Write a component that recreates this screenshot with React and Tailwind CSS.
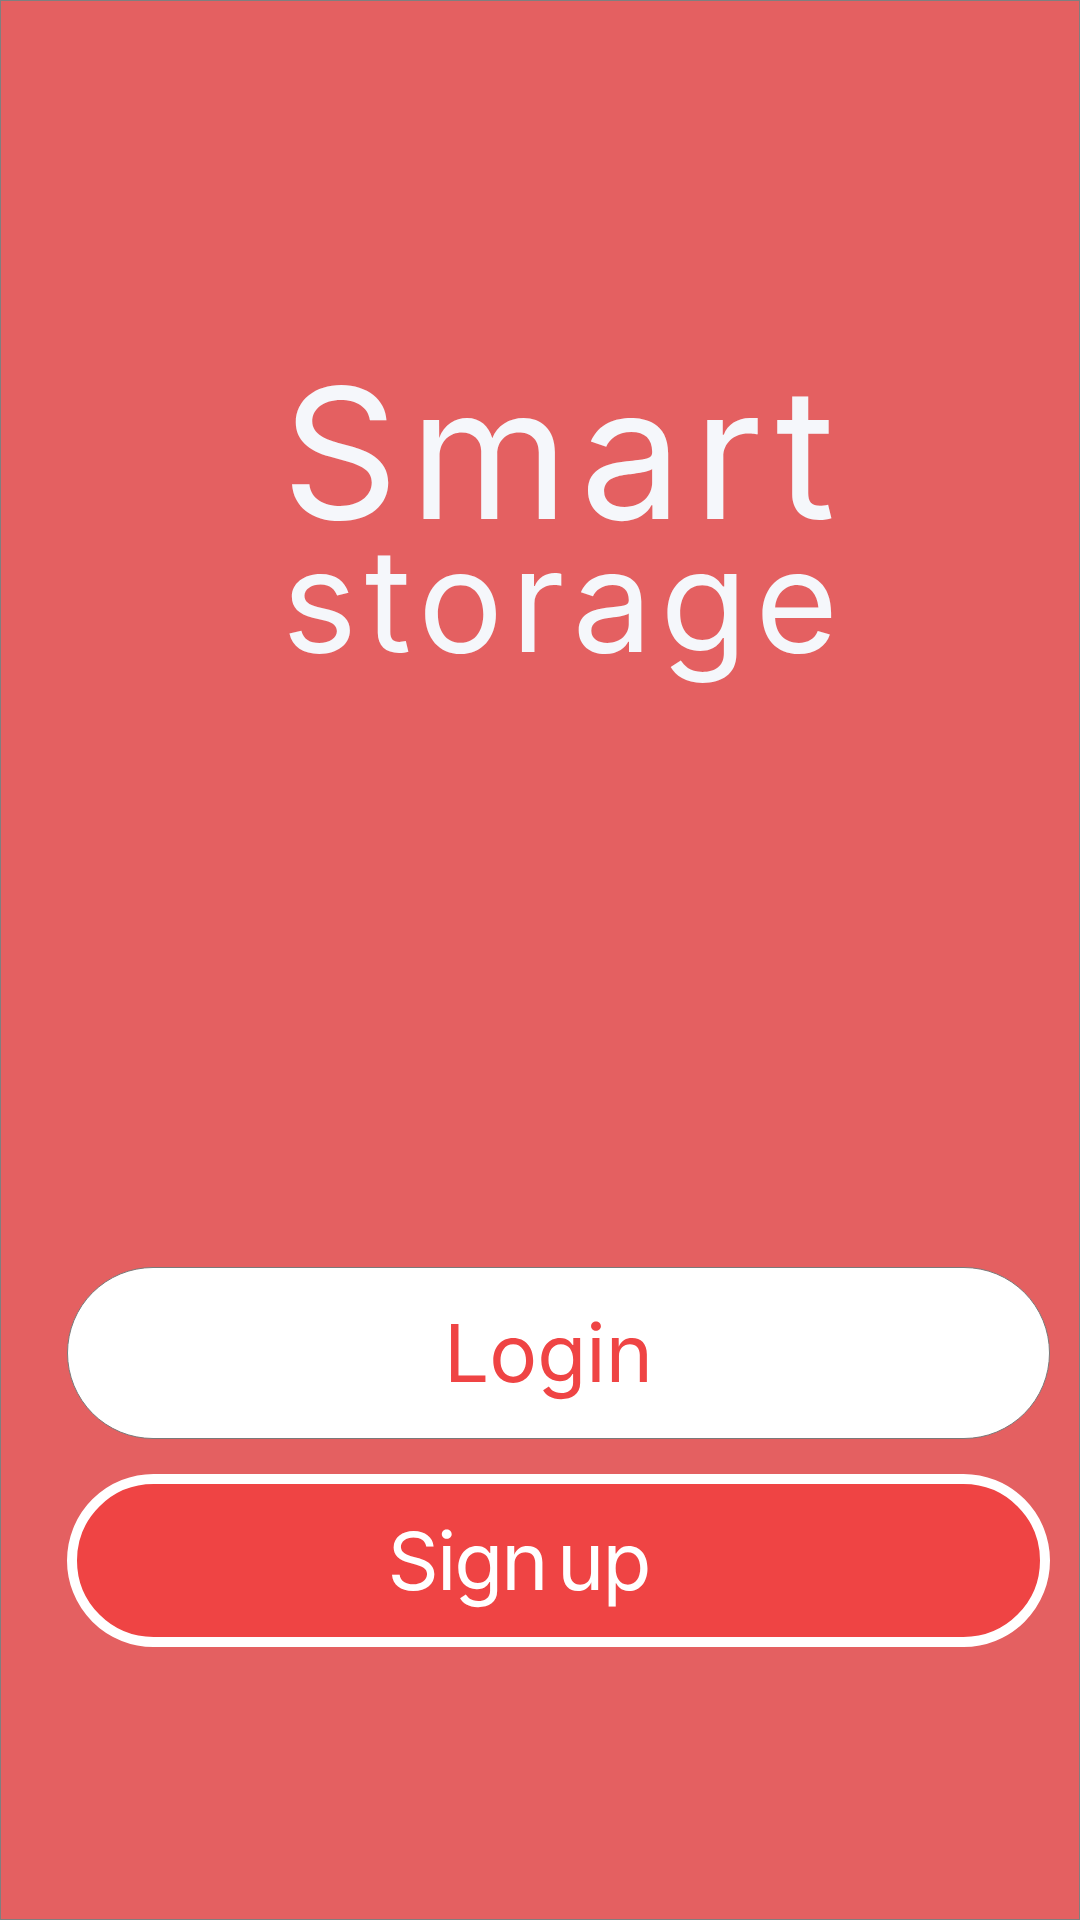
export default function App() {
  return (
    <div
      className="w-[1080px] h-[1920px] box-border border border-[#7f7f7f] bg-[#e46061] flex flex-col"
      style={{ fontFamily: "Inter, 'Noto Sans', sans-serif" }}
    >
      <div className="pt-[372px] pl-[48px] flex flex-col items-center text-[#f5f7fb]">
        <div className="text-[182px] leading-[160px] tracking-[11px]">Smart</div>
        <div className="text-[142px] leading-[134px] tracking-[8px]">storage</div>
      </div>

      <div className="mt-auto pb-[272px] pl-[66px] flex flex-col gap-[35px]">
        <button className="w-[983px] h-[172px] rounded-full bg-white border border-[#7a7a7a] text-[#ef4444] text-[80px] pr-[20px] flex items-center justify-center">
          Login
        </button>
        <button className="w-[983px] h-[173px] rounded-full bg-[#ef4444] border-[10px] border-white text-white text-[80px] tracking-[-2px] [word-spacing:-10px] pr-[80px] flex items-center justify-center">
          Sign up
        </button>
      </div>
    </div>
  );
}
